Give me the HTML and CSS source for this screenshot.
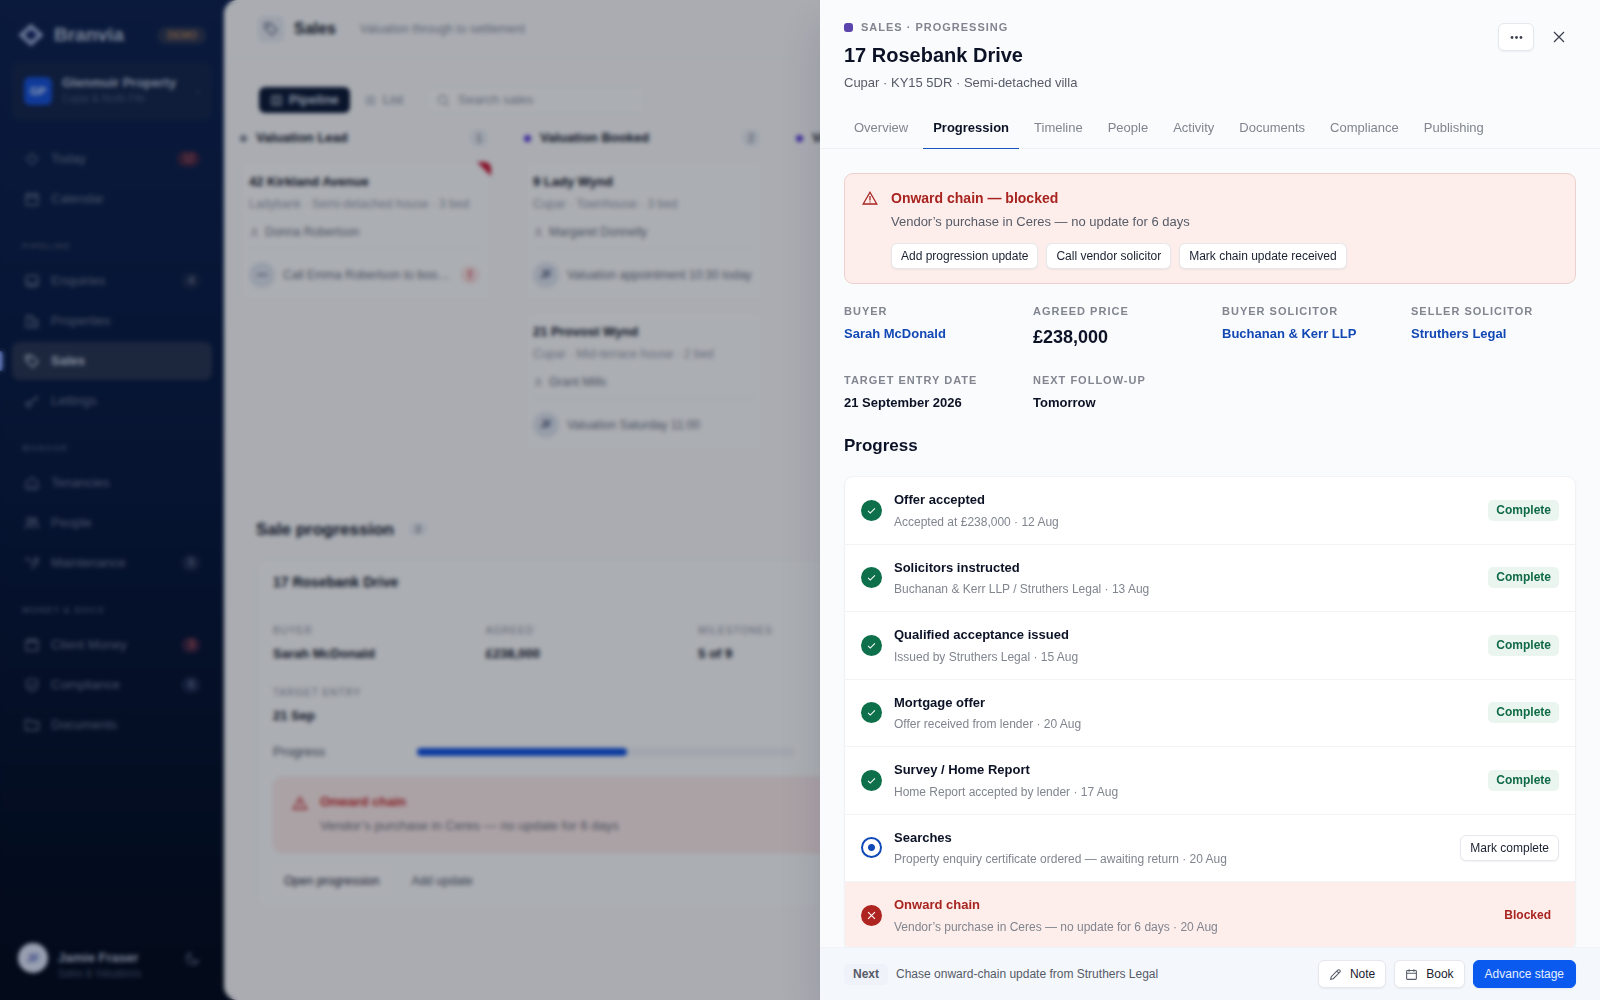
FILE: index.html
```html
<!DOCTYPE html>
<html lang="en">
<head>
    <meta charset="UTF-8">
    <meta name="viewport" content="width=device-width, initial-scale=1.0">
    <title>17 Rosebank Drive - Branvia</title>
    <link rel="stylesheet" href="styles.css">
</head>
<body>
    <svg class="sprite" aria-hidden="true">
        <symbol id="i-sun" viewBox="0 0 16 16"><circle cx="8" cy="8" r="4"/><path d="M8 1v1M8 14v1M1 8h1M14 8h1"/></symbol>
        <symbol id="i-calendar" viewBox="0 0 16 16"><rect x="2" y="3" width="12" height="11" rx="1"/><path d="M2 6.500h12M5 1.500v3M11 1.500v3"/></symbol>
        <symbol id="i-inbox" viewBox="0 0 16 16"><rect x="2" y="2.500" width="12" height="11" rx="2"/><path d="M2 9h3l1 2h4l1-2h3"/></symbol>
        <symbol id="i-building" viewBox="0 0 16 16"><path d="M2.500 14V3h6v11M8.500 7h5v7M1.500 14h13M5 6h1M5 9h1M11 10h1"/></symbol>
        <symbol id="i-tag" viewBox="0 0 16 16"><path d="M2 2.500h5.500L14 9l-5 5-7-6.500z"/><circle cx="5" cy="5.500" r=".7"/></symbol>
        <symbol id="i-key" viewBox="0 0 16 16"><circle cx="4.500" cy="11.500" r="2.500"/><path d="M6.500 9.500 14 3M11 5.500l2 2"/></symbol>
        <symbol id="i-home" viewBox="0 0 16 16"><path d="M2 7.500 8 2.500l6 5V13a1 1 0 0 1-1 1H3a1 1 0 0 1-1-1z"/><path d="M5.500 10.500h5"/></symbol>
        <symbol id="i-users" viewBox="0 0 16 16"><circle cx="5.500" cy="5.500" r="2.500"/><circle cx="11" cy="5.500" r="2"/><path d="M1.500 14c0-5 8-5 8 0M11 9.500c2.500 0 3.500 2 3.500 4"/></symbol>
        <symbol id="i-tool" viewBox="0 0 16 16"><path d="m2 3 3 1 4 5M7 14l7-7c1-2-1-5-3-4l1 2-2 2M2 6l2-3"/></symbol>
        <symbol id="i-wallet" viewBox="0 0 16 16"><path d="M2 5h12v8.500H2zM2 5l2-2.500h8L14 5"/></symbol>
        <symbol id="i-shield" viewBox="0 0 16 16"><path d="m8 1.500 5.500 2V8c0 4-3 5.500-5.500 6.500C5.500 13.500 2.500 12 2.500 8V3.500z"/><path d="m5.500 8 2 2 3-3.500"/></symbol>
        <symbol id="i-folder" viewBox="0 0 16 16"><path d="M1.500 13V3h4.500l2 2h6.500v8z"/></symbol>
        <symbol id="i-moon" viewBox="0 0 16 16"><path d="M6 2a6 6 0 1 0 8 8 6.500 6.500 0 0 1-8-8z"/></symbol>
        <symbol id="i-search" viewBox="0 0 16 16"><circle cx="7" cy="7" r="5"/><path d="m11 11 3.500 3.500"/></symbol>
        <symbol id="i-board" viewBox="0 0 16 16"><rect x="2" y="2.500" width="12" height="11" rx="1"/><path d="M6 2.500v11M10 2.500v11"/></symbol>
        <symbol id="i-list" viewBox="0 0 16 16"><path d="M2 4h12M2 8h12M2 12h12"/></symbol>
        <symbol id="i-person" viewBox="0 0 16 16"><circle cx="8" cy="5" r="2.500"/><path d="M3.500 14c0-5.500 9-5.500 9 0"/></symbol>
        <symbol id="i-alert" viewBox="0 0 16 16"><path d="M8 2.200 14.800 14H1.200z"/><path d="M8 6v4.500M8 11.500v1"/></symbol>
        <symbol id="i-pencil" viewBox="0 0 16 16"><path d="M2 14l.8-3.300 7.700-7.700c2-2 4.500.5 2.500 2.500l-7.700 7.700zM9.700 4l2.300 2.300"/></symbol>
        <symbol id="i-close" viewBox="0 0 16 16"><path d="m3 3 10 10M13 3 3 13"/></symbol>
        <symbol id="i-check" viewBox="0 0 16 16"><path d="m3 8.500 3.200 3.200L13 5"/></symbol>
        <symbol id="i-more" viewBox="0 0 16 16"><circle cx="2.500" cy="8" r="1.700"/><circle cx="8" cy="8" r="1.700"/><circle cx="13.500" cy="8" r="1.700"/></symbol>
    </svg>

    <div class="app">
        <aside class="sidebar">
            <div class="brand">
                <svg class="brand-mark" viewBox="0 0 26 26"><path d="M13 4.500 22.500 13 13 21.500 3.500 13z"/><path class="brand-core" d="m13 8 5.500 5-3.500 3-5.500-5z"/></svg>
                <span class="brand-name">Branvia</span>
                <span class="brand-badge">DEMO</span>
            </div>
            <button class="org" type="button">
                <span class="org-logo">GP</span>
                <span class="org-text"><strong>Glenmuir Property</strong><small>Cupar &amp; North Fife</small></span>
                <span class="org-more">›</span>
            </button>

            <nav class="nav">
                <a href="#"><svg class="icon"><use href="#i-sun"/></svg>Today<span class="count red">12</span></a>
                <a href="#"><svg class="icon"><use href="#i-calendar"/></svg>Calendar</a>
                <h6>PIPELINE</h6>
                <a href="#"><svg class="icon"><use href="#i-inbox"/></svg>Enquiries<span class="count">4</span></a>
                <a href="#"><svg class="icon"><use href="#i-building"/></svg>Properties</a>
                <a href="#" class="active"><svg class="icon"><use href="#i-tag"/></svg>Sales</a>
                <a href="#"><svg class="icon"><use href="#i-key"/></svg>Lettings</a>
                <h6>MANAGE</h6>
                <a href="#"><svg class="icon"><use href="#i-home"/></svg>Tenancies</a>
                <a href="#"><svg class="icon"><use href="#i-users"/></svg>People</a>
                <a href="#"><svg class="icon"><use href="#i-tool"/></svg>Maintenance<span class="count">5</span></a>
                <h6>MONEY &amp; DOCS</h6>
                <a href="#"><svg class="icon"><use href="#i-wallet"/></svg>Client Money<span class="count red">3</span></a>
                <a href="#"><svg class="icon"><use href="#i-shield"/></svg>Compliance<span class="count">6</span></a>
                <a href="#"><svg class="icon"><use href="#i-folder"/></svg>Documents</a>
            </nav>

            <div class="user">
                <span class="user-avatar">JF</span>
                <span class="user-text"><strong>Jamie Fraser</strong><small>Sales &amp; Valuations</small></span>
                <svg class="icon"><use href="#i-moon"/></svg>
            </div>
        </aside>

        <main class="main">
            <header class="topbar">
                <span class="topbar-icon"><svg class="icon"><use href="#i-tag"/></svg></span>
                <h1>Sales</h1>
                <p>Valuation through to settlement</p>
            </header>

            <div class="toolbar">
                <button class="view on" type="button"><svg class="icon"><use href="#i-board"/></svg>Pipeline</button>
                <button class="view" type="button"><svg class="icon"><use href="#i-list"/></svg>List</button>
                <label class="search"><svg class="icon"><use href="#i-search"/></svg><input type="search" placeholder="Search sales" aria-label="Search sales"></label>
            </div>

            <div class="board">
                <section class="column">
                    <h2 class="column-head"><i class="dot grey"></i>Valuation Lead<span class="pill">1</span></h2>
                    <article class="card flagged">
                        <h3>42 Kirkland Avenue</h3>
                        <p class="meta">Ladybank · Semi-detached house · 3 bed</p>
                        <p class="owner"><svg class="icon"><use href="#i-person"/></svg>Donna Robertson</p>
                        <div class="next"><span class="avatar">—</span><span class="next-text">Call Emma Robertson to boo…</span><span class="late">!</span></div>
                    </article>
                </section>
                <section class="column">
                    <h2 class="column-head"><i class="dot"></i>Valuation Booked<span class="pill">2</span></h2>
                    <article class="card">
                        <h3>9 Lady Wynd</h3>
                        <p class="meta">Cupar · Townhouse · 3 bed</p>
                        <p class="owner"><svg class="icon"><use href="#i-person"/></svg>Margaret Donnelly</p>
                        <div class="next"><span class="avatar">JF</span><span class="next-text">Valuation appointment 10:30 today</span></div>
                    </article>
                    <article class="card">
                        <h3>21 Provost Wynd</h3>
                        <p class="meta">Cupar · Mid-terrace house · 2 bed</p>
                        <p class="owner"><svg class="icon"><use href="#i-person"/></svg>Grant Mills</p>
                        <div class="next"><span class="avatar">JF</span><span class="next-text">Valuation Saturday 11:00</span></div>
                    </article>
                </section>
                <section class="column">
                    <h2 class="column-head"><i class="dot"></i>Valued</h2>
                </section>
            </div>

            <section class="sales">
                <h2>Sale progression <span class="pill">3</span></h2>
                <article class="sale">
                    <h3>17 Rosebank Drive</h3>
                    <dl class="facts">
                        <div><dt>BUYER</dt><dd>Sarah McDonald</dd></div>
                        <div><dt>AGREED</dt><dd>£238,000</dd></div>
                        <div><dt>MILESTONES</dt><dd>5 of 9</dd></div>
                        <div><dt>TARGET ENTRY</dt><dd>21 Sep</dd></div>
                    </dl>
                    <div class="meter"><span>Progress</span><div class="track"><div class="fill" style="width: 55.6%"></div></div></div>
                    <div class="sale-alert">
                        <svg class="icon"><use href="#i-alert"/></svg>
                        <div><strong>Onward chain</strong><p>Vendor’s purchase in Ceres — no update for 6 days</p></div>
                    </div>
                    <div class="sale-actions"><button type="button" class="outlined">Open progression</button><button type="button">Add update</button></div>
                </article>
            </section>
        </main>
    </div>

    <div class="scrim"></div>

    <section class="drawer" role="dialog" aria-modal="true" aria-labelledby="drawer-title">
        <header class="drawer-head">
            <div>
                <p class="eyebrow"><i class="chip"></i>SALES · PROGRESSING</p>
                <h2 id="drawer-title">17 Rosebank Drive</h2>
                <p class="subtitle">Cupar · KY15 5DR · Semi-detached villa</p>
            </div>
            <div class="head-actions">
                <button class="btn more" type="button" aria-label="More actions"><svg class="icon"><use href="#i-more"/></svg></button>
                <button class="close" type="button" aria-label="Close"><svg class="icon"><use href="#i-close"/></svg></button>
            </div>
        </header>

        <nav class="tabs">
            <a href="#">Overview</a>
            <a href="#" class="active">Progression</a>
            <a href="#">Timeline</a>
            <a href="#">People</a>
            <a href="#">Activity</a>
            <a href="#">Documents</a>
            <a href="#">Compliance</a>
            <a href="#">Publishing</a>
        </nav>

        <div class="drawer-body">
            <div class="alert">
                <svg class="icon"><use href="#i-alert"/></svg>
                <div>
                    <h3>Onward chain — blocked</h3>
                    <p>Vendor’s purchase in Ceres — no update for 6 days</p>
                    <div class="alert-actions">
                        <button class="btn small" type="button">Add progression update</button>
                        <button class="btn small" type="button">Call vendor solicitor</button>
                        <button class="btn small" type="button">Mark chain update received</button>
                    </div>
                </div>
            </div>

            <dl class="details">
                <div><dt>BUYER</dt><dd><a href="#">Sarah McDonald</a></dd></div>
                <div><dt>AGREED PRICE</dt><dd class="price">£238,000</dd></div>
                <div><dt>BUYER SOLICITOR</dt><dd><a href="#">Buchanan &amp; Kerr LLP</a></dd></div>
                <div><dt>SELLER SOLICITOR</dt><dd><a href="#">Struthers Legal</a></dd></div>
                <div><dt>TARGET ENTRY DATE</dt><dd>21 September 2026</dd></div>
                <div><dt>NEXT FOLLOW-UP</dt><dd>Tomorrow</dd></div>
            </dl>

            <h3 class="section-title">Progress</h3>
            <ol class="steps">
                <li>
                    <span class="mark done"><svg class="icon"><use href="#i-check"/></svg></span>
                    <div class="step-text"><h4>Offer accepted</h4><p>Accepted at £238,000 · 12 Aug</p></div>
                    <span class="status">Complete</span>
                </li>
                <li>
                    <span class="mark done"><svg class="icon"><use href="#i-check"/></svg></span>
                    <div class="step-text"><h4>Solicitors instructed</h4><p>Buchanan &amp; Kerr LLP / Struthers Legal · 13 Aug</p></div>
                    <span class="status">Complete</span>
                </li>
                <li>
                    <span class="mark done"><svg class="icon"><use href="#i-check"/></svg></span>
                    <div class="step-text"><h4>Qualified acceptance issued</h4><p>Issued by Struthers Legal · 15 Aug</p></div>
                    <span class="status">Complete</span>
                </li>
                <li>
                    <span class="mark done"><svg class="icon"><use href="#i-check"/></svg></span>
                    <div class="step-text"><h4>Mortgage offer</h4><p>Offer received from lender · 20 Aug</p></div>
                    <span class="status">Complete</span>
                </li>
                <li>
                    <span class="mark done"><svg class="icon"><use href="#i-check"/></svg></span>
                    <div class="step-text"><h4>Survey / Home Report</h4><p>Home Report accepted by lender · 17 Aug</p></div>
                    <span class="status">Complete</span>
                </li>
                <li>
                    <span class="mark current"></span>
                    <div class="step-text"><h4>Searches</h4><p>Property enquiry certificate ordered — awaiting return · 20 Aug</p></div>
                    <button class="btn small" type="button">Mark complete</button>
                </li>
                <li class="blocked">
                    <span class="mark"><svg class="icon"><use href="#i-close"/></svg></span>
                    <div class="step-text"><h4>Onward chain</h4><p>Vendor’s purchase in Ceres — no update for 6 days · 20 Aug</p></div>
                    <span class="status">Blocked</span>
                </li>
            </ol>
        </div>

        <footer class="drawer-foot">
            <span class="next-label">Next</span>
            <p>Chase onward-chain update from Struthers Legal</p>
            <button class="btn" type="button"><svg class="icon"><use href="#i-pencil"/></svg>Note</button>
            <button class="btn" type="button"><svg class="icon"><use href="#i-calendar"/></svg>Book</button>
            <button class="btn primary" type="button">Advance stage</button>
        </footer>
    </section>
</body>
</html>
```
FILE: styles.css
```css
* {
    margin: 0;
    padding: 0;
    box-sizing: border-box;
}

body {
    height: 100vh;
    overflow: hidden;
    font-family: "Liberation Sans", Arial, sans-serif;
    font-size: 13px;
    line-height: 20px;
    color: #0c1226;
}

button, input {
    font: inherit;
    color: inherit;
    border: 0;
    background: none;
}

a {
    color: inherit;
    text-decoration: none;
}

.sprite {
    display: none;
}

.icon {
    width: 16px;
    height: 16px;
    flex-shrink: 0;
    fill: none;
    stroke: currentColor;
    stroke-width: 1.3;
}

/* App behind the drawer */
.app {
    display: grid;
    grid-template-columns: 224px 1fr;
    height: 100vh;
    overflow: hidden;
    background: linear-gradient(#0b204e, #05163c 50%, #010b20 88%, #00091a);
}

.sidebar {
    display: flex;
    flex-direction: column;
    padding: 20px 12px 18px;
    color: #68748e;
}

.brand {
    display: flex;
    align-items: center;
    gap: 10px;
    height: 30px;
    padding: 0 6px;
    margin-bottom: 12px;
}

.brand-mark {
    width: 26px;
    height: 26px;
    fill: none;
    stroke: #9db0d8;
    stroke-width: 4;
}

.brand-mark .brand-core {
    fill: #13256e;
    stroke: none;
}

.brand-name {
    font-size: 19px;
    font-weight: 700;
    color: #b4bfd4;
}

.brand-badge {
    margin-left: auto;
    padding: 0 9px;
    border-radius: 8px;
    font-size: 10px;
    font-weight: 700;
    line-height: 17px;
    color: #a87c58;
    background: #2b3450;
}

.org {
    display: flex;
    align-items: center;
    gap: 10px;
    height: 58px;
    padding: 0 12px;
    margin-bottom: 20px;
    border-radius: 8px;
    text-align: left;
    background: #12244a;
}

.org-logo {
    width: 28px;
    border-radius: 6px;
    font-size: 11px;
    font-weight: 700;
    line-height: 28px;
    text-align: center;
    color: #cfe0ff;
    background: #1450d8;
}

.org-more {
    color: #3c4a6c;
}

.org-text, .user-text {
    flex: 1;
}

.org-text strong, .user-text strong {
    display: block;
    font-size: 13px;
    line-height: 16px;
    white-space: nowrap;
    color: #b4bfd4;
}

.org-text small, .user-text small {
    display: block;
    font-size: 10px;
    line-height: 16px;
    color: #4d5a78;
}

.nav a {
    position: relative;
    display: flex;
    align-items: center;
    gap: 11px;
    height: 38px;
    padding: 0 12px;
    margin-bottom: 2px;
    border-radius: 8px;
}

.nav a.active {
    font-weight: 700;
    color: #c8d0e0;
    background: #26334f;
}

/* Marker on the window edge */
.nav a.active::before {
    content: "";
    position: absolute;
    left: -16px;
    width: 7px;
    height: 20px;
    border-radius: 4px;
    background: #86a4ff;
}

.nav h6 {
    height: 42px;
    padding: 18px 10px 0;
    font-size: 9px;
    letter-spacing: 1px;
    line-height: 16px;
    color: #424f6e;
}

.nav .count {
    margin-left: auto;
    padding: 0 6px;
    border-radius: 8px;
    font-size: 10px;
    line-height: 16px;
    color: #8791ab;
    background: #1a294b;
}

.nav .count.red {
    color: #e06c68;
    background: #3c2340;
}

.user {
    display: flex;
    align-items: flex-start;
    gap: 10px;
    margin-top: auto;
    padding: 0 12px 0 6px;
}

.user-text {
    padding-top: 7px;
}

.user .icon {
    margin-top: 8px;
}

.user-avatar {
    width: 30px;
    border-radius: 50%;
    font-size: 11px;
    font-weight: 700;
    line-height: 30px;
    text-align: center;
    color: #4a62b8;
    background: #dfe7fa;
}

.main {
    overflow: hidden;
    border-radius: 14px 0 0 14px;
    background: #f9fafc;
}

.topbar {
    display: flex;
    align-items: center;
    gap: 10px;
    height: 58px;
    padding: 0 34px;
    border-bottom: 1px solid #f1f3f7;
}

.topbar-icon {
    display: grid;
    place-items: center;
    width: 26px;
    height: 26px;
    border-radius: 6px;
    color: #5c6880;
    background: #e6eaf2;
}

.topbar h1 {
    font-size: 16px;
}

.topbar p {
    margin-left: 14px;
    font-size: 12px;
    color: #8a909e;
}

.toolbar {
    display: flex;
    align-items: center;
    gap: 4px;
    padding: 29px 35px 0;
}

.view {
    display: flex;
    align-items: center;
    gap: 6px;
    height: 26px;
    padding: 0 10px;
    border-radius: 6px;
    color: #7c8494;
}

.view.on {
    padding: 0 11px;
    font-weight: 700;
    color: #cdd5e4;
    background: #0a1834;
}

.view .icon, .search .icon {
    width: 13px;
    height: 13px;
}

.search {
    display: flex;
    align-items: center;
    gap: 8px;
    width: 220px;
    height: 26px;
    padding-left: 11px;
    margin-left: 8px;
    border: 1px solid #f1f3f7;
    border-radius: 6px;
    color: #8a909e;
    background: #fbfcfd;
}

.search input::placeholder {
    color: #9097a4;
}

.board {
    display: grid;
    grid-template-columns: 264px 252px 252px;
    gap: 20px;
    height: 407px;
    padding: 15px 10px 0;
}

.column {
    padding: 0 6px;
}

.column-head {
    display: flex;
    align-items: center;
    gap: 9px;
    padding-right: 4px;
    margin-bottom: 13px;
    font-size: 13px;
    white-space: nowrap;
}

.dot {
    width: 7px;
    height: 7px;
    border-radius: 50%;
    background: #5434d8;
}

.dot.grey {
    background: #7e8696;
}

.pill {
    margin-left: auto;
    padding: 0 6px;
    border-radius: 9px;
    font-size: 11px;
    font-weight: 400;
    line-height: 18px;
    color: #5f687a;
    background: #e8ecf3;
}

.card {
    position: relative;
    height: 141px;
    padding: 10px 8px;
    margin-bottom: 9px;
    border: 1px solid #f0f2f6;
    border-radius: 8px;
    overflow: hidden;
    background: #fbfcfd;
}

/* Corner flag for overdue leads */
.card.flagged::before {
    content: "";
    position: absolute;
    top: 0;
    right: 0;
    border: 7px solid;
    border-color: #c8102e #c8102e transparent transparent;
}

.card h3 {
    font-size: 13px;
}

.card .meta {
    margin-top: 2px;
    font-size: 12px;
    white-space: nowrap;
    color: #979dab;
}

.owner {
    display: flex;
    align-items: center;
    gap: 5px;
    margin-top: 8px;
    font-size: 12px;
    color: #6b7282;
}

.owner .icon {
    width: 11px;
    height: 11px;
}

.next {
    display: flex;
    align-items: center;
    gap: 8px;
    height: 48px;
    padding-top: 4px;
    margin-top: 6px;
    border-top: 1px solid #f1f3f7;
    font-size: 12px;
    color: #6b7282;
}

.next-text {
    flex: 1;
    white-space: nowrap;
}

.avatar {
    width: 26px;
    border-radius: 50%;
    font-size: 10px;
    font-weight: 700;
    line-height: 26px;
    text-align: center;
    color: #44517a;
    background: #dfe5f0;
}

.late {
    width: 18px;
    margin-right: 4px;
    border-radius: 9px;
    font-weight: 700;
    line-height: 18px;
    text-align: center;
    color: #c5303a;
    background: #f9dfdf;
}

.sales {
    padding: 0 32px;
}

.sales h2 {
    margin-bottom: 19px;
    font-size: 17px;
}

.sales h2 .pill {
    margin-left: 10px;
    vertical-align: 2px;
}

.sale {
    width: 648px;
    padding: 12px 16px 12px;
    border: 1px solid #f1f3f7;
    border-radius: 10px;
    background: #fbfcfd;
}

.sale h3 {
    margin-bottom: 29px;
    font-size: 14px;
}

.facts {
    display: grid;
    grid-template-columns: repeat(3, 1fr);
    gap: 19px 24px;
}

.facts dt {
    margin-bottom: 3px;
    font-size: 10px;
    letter-spacing: 1px;
    color: #8a909e;
}

.facts dd {
    font-weight: 700;
}

.meter {
    display: grid;
    grid-template-columns: 144px 378px;
    align-items: center;
    margin: 16px 0 15px;
    color: #4b5366;
}

.track {
    height: 8px;
    border-radius: 4px;
    background: #edf0f5;
}

.fill {
    height: 100%;
    border-radius: 4px;
    background: #0b4fe0;
}

.sale-alert {
    display: flex;
    gap: 12px;
    padding: 14px 18px 16px;
    border: 1px solid #f4dcda;
    border-radius: 10px;
    color: #c3262b;
    background: #fbebea;
}

.sale-alert .icon {
    margin-top: 3px;
}

.sale-alert p {
    margin-top: 4px;
    color: #6b6f7c;
}

.sale-actions {
    display: flex;
    gap: 10px;
    margin-top: 14px;
    font-size: 12px;
    color: #4b5366;
}

.sale-actions button {
    height: 28px;
    padding: 0 11px;
    border-radius: 7px;
}

.sale-actions .outlined {
    color: #1c2438;
    background: #fdfdfe;
}

.scrim {
    position: fixed;
    inset: 0;
    background: rgba(8, 14, 28, 0.33);
    backdrop-filter: blur(2px);
}

/* Drawer */
.drawer {
    position: fixed;
    top: 0;
    right: 0;
    bottom: 0;
    display: flex;
    flex-direction: column;
    width: min(780px, 100%);
    background: #fafbfd;
    box-shadow: 0 24px 40px rgba(8, 20, 50, 0.12);
}

.drawer-head {
    display: flex;
    justify-content: space-between;
    padding: 17px 24px 0;
}

.eyebrow {
    display: flex;
    align-items: center;
    gap: 8px;
}

.eyebrow, .details dt {
    font-size: 11px;
    font-weight: 700;
    letter-spacing: 1px;
    color: #80858f;
}

.chip {
    width: 9px;
    height: 9px;
    border-radius: 3px;
    background: #5b45ad;
}

.drawer-head h2 {
    margin: 4px 0;
    font-size: 20px;
    line-height: 28px;
}

.subtitle {
    color: #565b68;
}

.head-actions {
    display: flex;
    gap: 8px;
    padding-top: 6px;
}

.btn {
    display: inline-flex;
    align-items: center;
    justify-content: center;
    gap: 8px;
    height: 28px;
    padding: 0 10px;
    border: 1px solid #e6e8ed;
    border-radius: 6px;
    font-size: 12px;
    white-space: nowrap;
    color: #1a2030;
    background: #fff;
    box-shadow: 0 1px 2px rgba(16, 24, 40, 0.06);
}

.btn .icon {
    width: 13px;
    height: 13px;
    color: #565b68;
}

.btn.small {
    height: 26px;
    padding: 0 9px;
}

.btn.more {
    width: 36px;
    padding: 0;
}

.btn.more .icon {
    fill: #3c414d;
    stroke: none;
}

.btn.primary {
    padding: 0 11px;
    border-color: #0a5aef;
    color: #e6efff;
    background: #0a5aef;
}

.close {
    display: grid;
    place-items: center;
    width: 34px;
    height: 28px;
    color: #3c414d;
}

.tabs {
    display: flex;
    gap: 5px;
    padding: 17px 24px 0;
    border-bottom: 1px solid #eff1f4;
}

.tabs a {
    height: 39px;
    padding: 8px 10px 0;
    margin-bottom: -1px;
    border-bottom: 1px solid transparent;
    color: #80858f;
}

.tabs a.active {
    border-color: #1a53c0;
    font-weight: 700;
    color: #0c1226;
}

.drawer-body {
    flex: 1;
    min-height: 0;
    overflow: hidden;
    padding: 24px 24px 0;
}

.alert {
    display: flex;
    gap: 13px;
    padding: 14px 17px;
    border: 1px solid #ecd0cd;
    border-radius: 9px;
    color: #a82420;
    background: #feeeeb;
}

.alert .icon {
    margin-top: 2px;
}

.alert h3 {
    font-size: 14px;
}

.alert p {
    margin: 4px 0 11px;
    color: #565b68;
}

.alert-actions {
    display: flex;
    gap: 8px;
}

.details {
    display: grid;
    grid-template-columns: repeat(4, 1fr);
    gap: 20px 24px;
    padding: 17px 0 23px;
}

.details dt {
    margin-bottom: 3px;
}

.details dd {
    font-weight: 700;
}

.details dd.price {
    font-size: 18px;
    line-height: 26px;
}

.details a {
    color: #1248b4;
}

.section-title {
    margin-bottom: 20px;
    font-size: 17px;
    line-height: 20px;
}

.steps {
    list-style: none;
    border: 1px solid #f0f2f5;
    border-radius: 9px;
    overflow: hidden;
    background: #fff;
    box-shadow: 0 1px 2px rgba(16, 24, 40, 0.06);
}

.steps li {
    display: flex;
    align-items: center;
    gap: 12px;
    padding: 13px 16px;
    line-height: 1.5;
}

.steps li + li {
    border-top: 1px solid #f1f3f5;
}

.step-text {
    flex: 1;
}

.step-text h4 {
    font-size: 13px;
}

.step-text p {
    margin-top: 3px;
    font-size: 12px;
    color: #80858f;
}

.mark {
    display: grid;
    place-items: center;
    width: 21px;
    height: 21px;
    border-radius: 50%;
    color: #fff;
    background: #ae2420;
}

.mark .icon {
    width: 11px;
    height: 11px;
    stroke-width: 1.6;
}

.mark.done {
    background: #0d704a;
}

.mark.current {
    border: 2px solid #0f49b8;
    background: radial-gradient(circle, #0f49b8 3px, #fff 4px);
}

.status {
    padding: 0 8px;
    border-radius: 5px;
    font-size: 12px;
    font-weight: 700;
    line-height: 21px;
    color: #0f6a45;
    background: #eaf5f0;
}

.blocked {
    background: #feeeeb;
}

.blocked h4, .blocked .status {
    color: #a82420;
}

.blocked .status {
    background: none;
}

.drawer-foot {
    display: flex;
    align-items: center;
    gap: 8px;
    height: 53px;
    padding: 0 24px;
    border-top: 1px solid #eff2f6;
    background: #f4f7fb;
}

.drawer-foot p {
    flex: 1;
    font-size: 12px;
    color: #565b68;
}

.next-label {
    padding: 0 9px;
    border-radius: 5px;
    font-size: 12px;
    font-weight: 700;
    line-height: 21px;
    color: #565b68;
    background: #eff2f8;
}
```
